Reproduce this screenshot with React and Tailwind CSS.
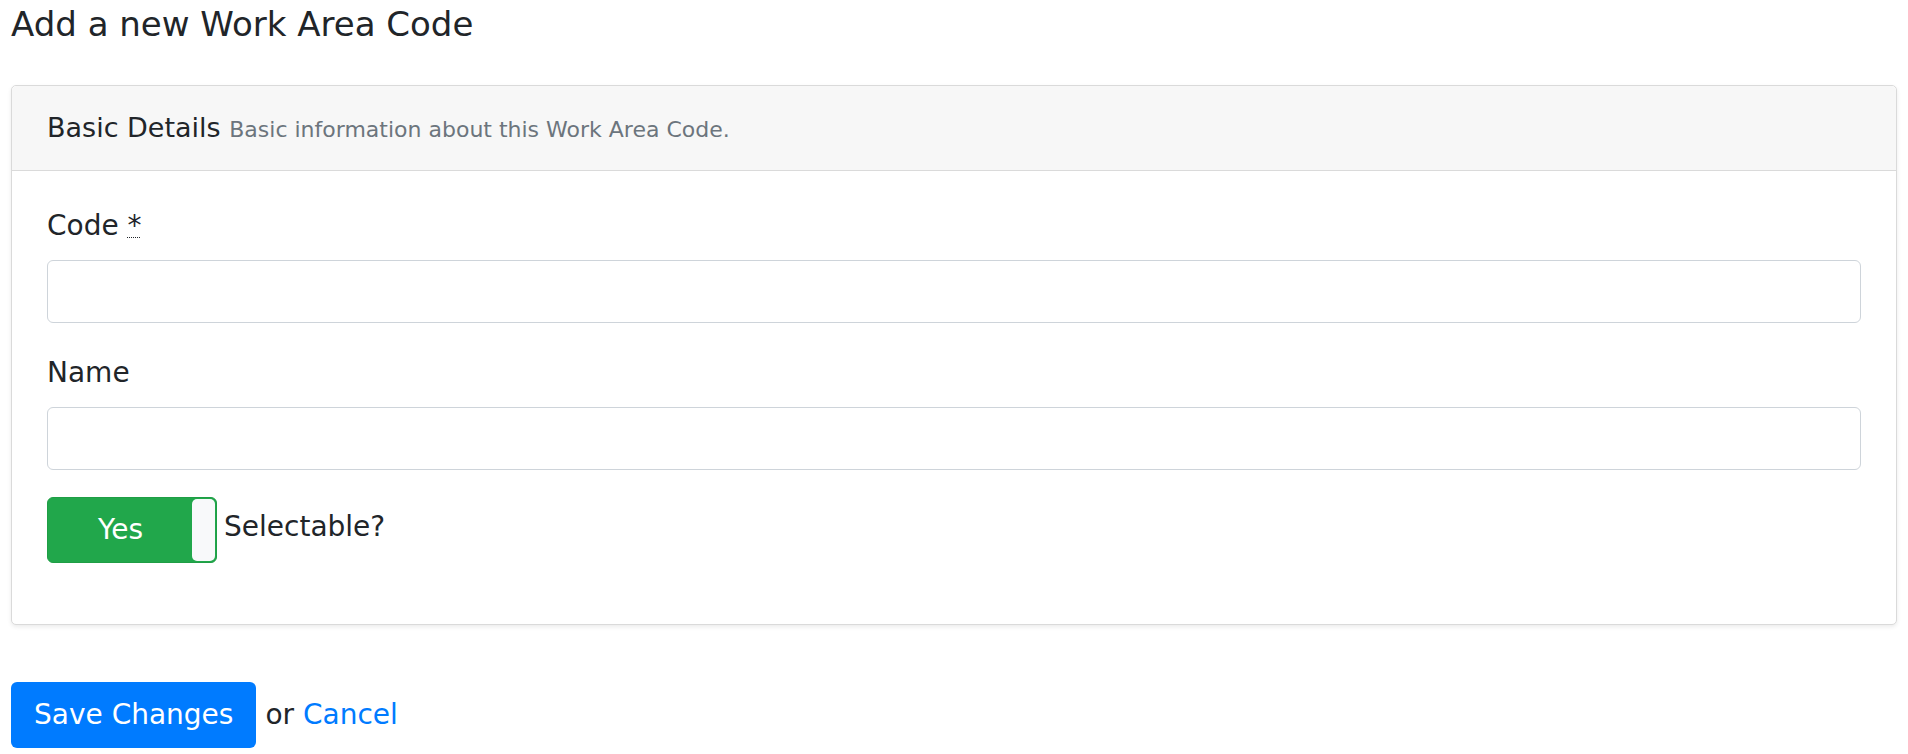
export default function App() {
  return (
    <div className="min-h-screen bg-white px-[11px] font-['DejaVu_Sans',sans-serif] text-[#212529]">
      <h1 className="text-[34px] leading-[48px] font-normal">Add a new Work Area Code</h1>

      <div className="mt-[37px] rounded-[5px] border border-[#dadada] bg-white shadow-[0_2px_4px_rgba(0,0,0,0.08)]">
        <div className="rounded-t-[5px] border-b border-[#dadada] bg-[#f7f7f7] pl-[35px] pr-[35px] pt-[22px] pb-[22px] text-[27px] leading-[40px]">
          <span>Basic Details</span>{" "}
          <span className="text-[22px] leading-[20px] text-[#6c757d]">Basic information about this Work Area Code.</span>
        </div>

        <div className="px-[35px] pt-[35px] pb-[61px]">
          <label className="block text-[28px] leading-[40px] mb-[14px]">
            Code{" "}
            <abbr title="required" className="no-underline">
              <span className="underline decoration-dotted decoration-1 underline-offset-2">*</span>
            </abbr>
          </label>
          <input
            type="text"
            className="block h-[63px] w-full rounded-[6px] border-[1.5px] border-[#ced4da] bg-white px-4 text-[28px] outline-none"
          />

          <label className="mt-[30px] block text-[28px] leading-[40px] mb-[14px]">Name</label>
          <input
            type="text"
            className="block h-[63px] w-full rounded-[6px] border-[1.5px] border-[#ced4da] bg-white px-4 text-[28px] outline-none"
          />

          <div className="mt-[27px] flex items-start gap-[7px]">
            <div className="flex h-[66px] w-[170px] items-stretch rounded-[6px] border border-[#1f9e45] bg-[#21a74b] p-[1px]">
              <div className="flex flex-1 items-center justify-center text-[28px] leading-[40px] text-white">Yes</div>
              <div className="w-[23px] rounded-[5px] bg-[#f8f9fa]" />
            </div>
            <span className="pt-[10px] text-[28px] leading-[40px]">Selectable?</span>
          </div>
        </div>
      </div>

      <div className="mt-[57px] flex items-center">
        <button className="flex h-[66px] items-center rounded-[6px] bg-[#007bff] px-[23px] text-[28px] leading-[40px] text-white">
          Save Changes
        </button>
        <span className="ml-[9px] text-[28px] leading-[40px]">
          or <a href="#" className="text-[#007bff]">Cancel</a>
        </span>
      </div>
    </div>
  );
}
